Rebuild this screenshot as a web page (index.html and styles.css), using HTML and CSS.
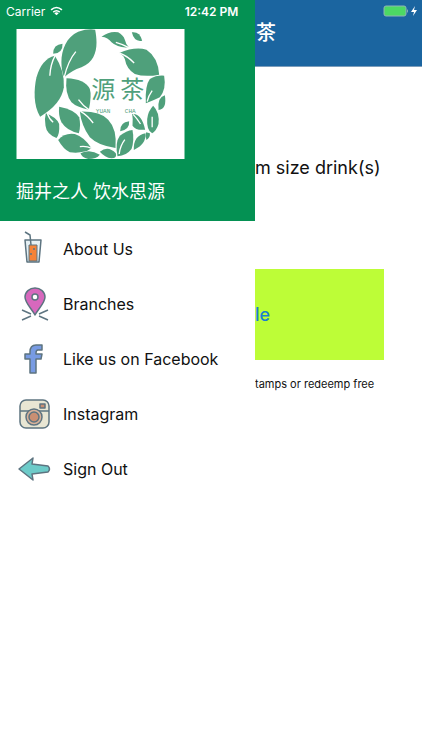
FILE: index.html
```
<!DOCTYPE html>
<html lang="en">
<head>
    <meta charset="UTF-8">
    <meta name="viewport" content="width=device-width, initial-scale=1.0">
    <title>源茶</title>
    <link rel="stylesheet" href="styles.css">
</head>
<body>
    <div class="status-bar">
        <div class="carrier">
            Carrier
            <svg class="wifi" viewBox="0 0 24 18" aria-hidden="true">
                <path d="M2 7 Q12 -2 22 7" />
                <path d="M6 11 Q12 6 18 11" />
                <path class="dot" d="M8 13 Q12 10 16 13 L12 17 Z" />
            </svg>
        </div>
        <div class="time">12:42 PM</div>
        <div class="power">
            <svg class="battery" viewBox="0 0 26 12" aria-hidden="true">
                <rect class="level" x="1" y="1" width="22" height="10" rx="2" />
                <path class="tip" d="M24 4 Q26 6 24 8 Z" />
            </svg>
            <svg class="bolt" viewBox="0 0 6 10" aria-hidden="true">
                <path d="M4 0 L0 6 H3 L2 10 L6 4 H3 Z" />
            </svg>
        </div>
    </div>

    <div class="app">
        <aside class="drawer">
            <div class="drawer-header">
                <svg class="logo" viewBox="20 20 504 390" role="img" aria-label="源茶">
                    <rect class="paper" x="20" y="20" width="504" height="390" />
                    <g class="leaves">
                        <path d="M163 165C145 120 155 50 205 28Q235 18 256 22C265 70 262 115 215 135Q185 145 163 165Z" />
                        <path d="M130 94Q130 66 158 64Q160 92 130 94Z" />
                        <path d="M91 283C70 250 72 200 80 165Q95 110 135 100Q165 145 162 195Q155 245 91 283Z" />
                        <path d="M170 168Q225 170 240 200Q246 220 237 262Q200 255 185 240Q165 215 170 168Z" />
                        <path d="M108 273Q140 285 148 305Q150 335 140 347Q110 335 107 310Q103 290 108 273Z" />
                        <path d="M148 253Q195 262 208 285Q214 310 207 333Q170 325 155 300Q145 280 148 253Z" />
                        <path d="M145 353Q165 330 195 335Q225 345 245 378Q220 395 180 390Q160 380 145 353Z" />
                        <path d="M212 393Q240 378 270 397Q260 410 235 410Q215 405 212 393Z" />
                        <path d="M210 268Q270 266 295 292Q322 320 317 377Q265 370 240 345Q215 310 210 268Z" />
                        <path d="M275 43Q300 25 325 30Q340 38 345 52Q348 66 357 75Q325 78 305 60Q295 45 275 43Z" />
                        <path d="M366 30Q390 27 397 55Q373 60 366 30Z" />
                        <path d="M328 92Q375 72 410 82Q445 105 448 157Q405 165 375 155Q350 140 345 110Q340 98 328 92Z" />
                        <path d="M408 243Q405 190 420 170Q440 158 463 160Q470 200 450 225Q430 235 408 243Z" />
                        <path d="M446 263Q442 225 465 219Q472 260 446 263Z" />
                        <path d="M430 250Q450 270 446 305Q440 325 427 333Q410 325 412 290Q415 265 430 250Z" />
                        <path d="M367 275Q395 272 406 322Q378 325 368 310Q370 290 367 275Z" />
                        <path d="M331 327Q330 300 358 297Q360 322 331 327Z" />
                        <path d="M323 402Q315 360 330 340Q350 325 368 323Q374 355 365 380Q350 400 323 402Z" />
                        <path d="M372 383Q370 340 407 333Q410 365 372 383Z" />
                        <path d="M409 330L420 333Q422 345 410 353Q405 341 409 330Z" />
                        <path d="M270 388Q295 368 318 393Q323 408 305 408Q285 405 270 388Z" />
                    </g>
                    <g class="veins">
                        <path d="M163 165Q175 115 198 88" />
                        <path d="M120 160Q122 125 136 100" />
                        <path d="M206 232Q220 252 240 264" />
                        <path d="M112 272Q118 290 130 300" />
                        <path d="M210 373Q228 370 246 378" />
                        <path d="M212 267Q232 278 250 302" />
                        <path d="M318 60Q340 66 357 76" />
                        <path d="M328 92Q352 100 373 122" />
                        <path d="M412 238Q416 220 427 205" />
                        <path d="M427 283V315" />
                        <path d="M328 395Q331 370 345 352" />
                        <path d="M370 276Q383 290 392 305" />
                    </g>
                    <text class="logo-name" x="244" y="227">源</text>
                    <text class="logo-name" x="331" y="227">茶</text>
                    <text class="logo-latin" x="258" y="271">YUAN</text>
                    <text class="logo-latin" x="345" y="271">CHA</text>
                </svg>
                <p class="motto">掘井之人 饮水思源</p>
            </div>

            <nav class="menu">
                <a class="menu-item" href="#about">
                    <svg class="icon" viewBox="0 0 36 36" aria-hidden="true">
                        <path class="glass" d="M9 9H25L23 31H11Z" />
                        <path class="juice" d="M13 14H21V30H13Z" />
                        <path class="line" d="M9 1L14 4L15 14" />
                        <circle class="seed" cx="18" cy="18" r="1" />
                        <circle class="seed" cx="15" cy="23" r="1" />
                    </svg>
                    About Us
                </a>
                <a class="menu-item" href="#branches">
                    <svg class="icon" viewBox="0 0 36 36" aria-hidden="true">
                        <path class="line" d="M6 24L15 28M6 34L15 30M32 24L23 28M32 34L23 30" />
                        <path class="pin" d="M19 29C16 23 9 17 9 11A10 9 0 0 1 29 11C29 17 22 23 19 29Z" />
                        <circle class="pin-hole" cx="19" cy="11" r="3" />
                    </svg>
                    Branches
                </a>
                <a class="menu-item" href="#facebook">
                    <svg class="icon" viewBox="0 0 36 36" aria-hidden="true">
                        <path class="facebook" d="M14 32V18H9V13H14V11Q14 4 20 4H26V9H22Q20 9 20 12V13H26L25 18H20V32Z" />
                    </svg>
                    Like us on Facebook
                </a>
                <a class="menu-item" href="#instagram">
                    <svg class="icon" viewBox="0 0 36 36" aria-hidden="true">
                        <rect class="camera" x="4" y="4" width="29" height="28" rx="6" />
                        <path class="line" d="M4 15H33" />
                        <circle class="lens" cx="18" cy="21" r="8" />
                        <circle class="lens-glass" cx="18" cy="21" r="5" />
                        <rect class="lens-glass" x="24" y="8" width="5" height="4" />
                    </svg>
                    Instagram
                </a>
                <a class="menu-item" href="#signout">
                    <svg class="icon" viewBox="0 0 36 36" aria-hidden="true">
                        <path class="arrow" d="M3 18L17 7L16 13L32 15Q35 18 32 21L16 23L17 29Z" />
                    </svg>
                    Sign Out
                </a>
            </nav>
        </aside>

        <main class="page">
            <header class="page-header">
                <h1>茶</h1>
            </header>
            <p class="reward">m size drink(s)</p>
            <button class="code-button" type="button">le</button>
            <p class="hint">tamps or redeemp free</p>
        </main>
    </div>
</body>
</html>
```
FILE: styles.css
```
:root {
    --green: #049153;
    --blue: #1b65a0;
    --lime: #bdfd37;
    --leaf: #4fa07b;
    --outline: #5d7480;
}

* {
    margin: 0;
    padding: 0;
    box-sizing: border-box;
}

body {
    font-family: Inter, "Noto Sans CJK SC", sans-serif;
    background: #ffffff;
    color: #111111;
}

.status-bar {
    position: absolute;
    top: 0;
    left: 0;
    right: 0;
    display: grid;
    grid-template-columns: 1fr auto 1fr;
    align-items: center;
    height: 22px;
    padding: 0 5px 0 6px;
    color: #ffffff;
    font-size: 12px;
}

.carrier,
.power {
    display: flex;
    align-items: center;
    gap: 5px;
}

.power {
    justify-content: flex-end;
    gap: 2px;
}

.time {
    font-weight: 600;
}

.wifi {
    width: 13px;
    height: 10px;
    fill: none;
    stroke: #ffffff;
    stroke-width: 3;
}

.wifi .dot {
    fill: #ffffff;
    stroke: none;
}

.battery {
    width: 26px;
    height: 12px;
}

.battery .level {
    fill: #4cd964;
    stroke: #8fb5b5;
}

.battery .tip {
    fill: #8fb5b5;
}

.bolt {
    width: 6px;
    height: 10px;
    fill: #ffffff;
}

.app {
    display: flex;
    min-height: 100vh;
}

.drawer {
    flex: 0 0 255px;
    background: #ffffff;
}

.drawer-header {
    padding: 29px 16px 16px;
    background: var(--green);
    color: #ffffff;
}

.logo {
    display: block;
    width: 169px;
    height: 130px;
}

.paper {
    fill: #ffffff;
}

.leaves {
    fill: var(--leaf);
}

.veins {
    fill: none;
    stroke: #ffffff;
    stroke-width: 4;
}

.logo-name {
    fill: var(--leaf);
    font-family: "Noto Sans CJK SC", sans-serif;
    font-size: 72px;
}

.logo-latin {
    fill: var(--leaf);
    font-family: "Liberation Mono", monospace;
    font-size: 18px;
}

.motto {
    margin-top: 20px;
    font-size: 18px;
    line-height: 26px;
}

.menu-item {
    display: flex;
    align-items: center;
    gap: 11px;
    height: 55px;
    padding-left: 16px;
    color: #111111;
    font-size: 16px;
    text-decoration: none;
}

.icon {
    width: 36px;
    height: 36px;
    fill: none;
    stroke: var(--outline);
    stroke-width: 1.5;
    stroke-linejoin: round;
}

.glass {
    fill: #e6f0f4;
}

.juice {
    fill: #f58237;
    stroke-width: 1;
}

.seed {
    fill: var(--outline);
    stroke: none;
}

.pin {
    fill: #d768bd;
}

.pin-hole {
    fill: #ffffff;
}

.facebook {
    fill: #789be3;
}

.camera {
    fill: #e8e6d3;
}

.lens {
    fill: #d9b39b;
}

.lens-glass {
    fill: #c98f73;
}

.arrow {
    fill: #6dcbc9;
}

.page {
    flex: 1;
    overflow: hidden;
    white-space: nowrap;
}

.page-header {
    height: 67px;
    padding: 20px 1px 0;
    background: var(--blue);
    border-bottom: 1px solid #7c9dbb;
    color: #ffffff;
}

.page-header h1 {
    font-size: 20px;
    font-weight: 500;
    line-height: 26px;
}

.reward {
    margin-top: 88px;
    font-size: 18px;
    line-height: 26px;
}

.code-button {
    display: block;
    width: calc(100% - 38px);
    height: 91px;
    margin-top: 88px;
    border: none;
    background: var(--lime);
    color: #1a7fd0;
    font-family: inherit;
    font-size: 18px;
    font-weight: 500;
    text-align: left;
}

.hint {
    margin-top: 16px;
    font-size: 11px;
    line-height: 16px;
}
```
